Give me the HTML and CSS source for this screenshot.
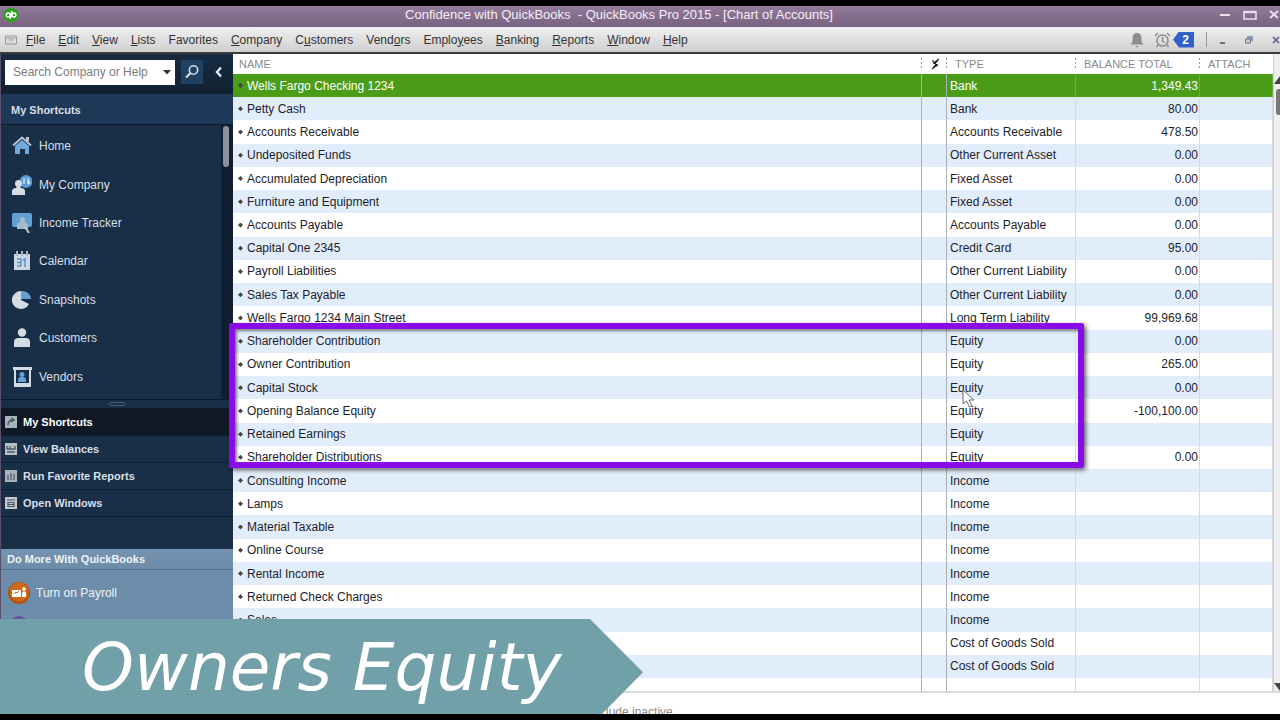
FILE: index.html
```html
<!DOCTYPE html>
<html lang="en">
<head>
<meta charset="utf-8">
<title>Confidence with QuickBooks - QuickBooks Pro 2015 - [Chart of Accounts]</title>
<link rel="stylesheet" href="styles.css">
</head>
<body>
<div class="app">
  <header class="titlebar">
    <svg class="logo" viewBox="0 0 16 14"><ellipse cx="8" cy="7" rx="8" ry="7" fill="#2ca01c"/><g fill="none" stroke="#fff" stroke-width="1.5"><circle cx="5.3" cy="7" r="2"/><path d="M7.3 5v6"/><circle cx="10.9" cy="7" r="2"/><path d="M8.9 3v6"/></g></svg>
    <h1 class="title">Confidence with QuickBooks&nbsp; - QuickBooks Pro 2015 - [Chart of Accounts]</h1>
    <div class="window-buttons">
      <button aria-label="Minimize"><svg width="12" height="12" viewBox="0 0 12 12"><path d="M1 6h10" stroke="#e8e0ec" stroke-width="2"/></svg></button>
      <button aria-label="Maximize"><svg width="14" height="12" viewBox="0 0 14 12"><path d="M1 3h12v7H1z" fill="none" stroke="#e8e0ec" stroke-width="1.6"/><path d="M1 3h12" stroke="#e8e0ec" stroke-width="2.400"/></svg></button>
      <button aria-label="Close"><svg width="10" height="12" viewBox="0 0 10 12"><path d="M1 2l8 7M9 2L1 9" stroke="#e8e0ec" stroke-width="2"/></svg></button>
    </div>
  </header>

  <nav class="menubar" aria-label="Main menu">
    <svg class="doc-icon" viewBox="0 0 12 10"><path d="M.5 1h11v8H.5zM1 3h10M4 5h4" fill="none" stroke="#999"/></svg>
    <div class="menus">
      <button><u>F</u>ile</button><button><u>E</u>dit</button><button><u>V</u>iew</button><button><u>L</u>ists</button><button>Favorites</button><button><u>C</u>ompany</button><button>C<u>u</u>stomers</button><button>Vend<u>o</u>rs</button><button>Emplo<u>y</u>ees</button><button><u>B</u>anking</button><button><u>R</u>eports</button><button><u>W</u>indow</button><button><u>H</u>elp</button>
    </div>
    <div class="menu-tools">
      <button aria-label="Alerts"><svg width="14" height="16" viewBox="0 0 14 16"><path d="M7 1c3 0 4.500 2 4.500 5v4l2 2.500H.5L2.500 10V6c0-3 1.500-5 4.500-5z" fill="#8d8d8d"/><path d="M5 14h4l-2 1.500z" fill="#8d8d8d"/></svg></button>
      <button class="reminders" aria-label="Reminders, 2"><svg width="17" height="16" viewBox="0 0 17 16"><g fill="none" stroke="#8a8a8a" stroke-width="1.400"><circle cx="8.500" cy="8.500" r="5.500"/><path d="M8.500 5v4l2 1.500M1 4l3-3M16 4l-3-3M4 13l-1.500 2M13 13l1.500 2"/></g></svg><span class="badge">2</span></button>
      <span class="divider"></span>
      <button aria-label="Minimize list"><svg width="7" height="12" viewBox="0 0 7 12"><path d="M1 9h5" stroke="#555" stroke-width="1.600"/></svg></button>
      <button aria-label="Restore list"><svg width="10" height="12" viewBox="0 0 10 12"><path d="M3 2h6v5H3z" fill="#8d98a8"/><path d="M1.500 5h5v4h-5z" fill="#c8ccd4" stroke="#66748a"/></svg></button>
      <button aria-label="Close list"><svg width="8" height="12" viewBox="0 0 8 12"><path d="M1 3l6 6M7 3L1 9" stroke="#53647e" stroke-width="1.600"/></svg></button>
    </div>
  </nav>

  <div class="workspace">
    <aside class="sidebar">
      <form class="search">
        <input type="text" placeholder="Search Company or Help" aria-label="Search Company or Help">
        <button type="button" class="scope" aria-label="Search scope"><svg width="8" height="5" viewBox="0 0 8 5"><path d="M0 0h8L4 4.500z" fill="#333"/></svg></button>
        <button type="button" class="find" aria-label="Search"><svg width="16" height="16" viewBox="0 0 16 16"><circle cx="9.500" cy="6" r="4.200" fill="none" stroke="#d4dde6" stroke-width="1.600"/><path d="M6.500 9L2 13.500" stroke="#d4dde6" stroke-width="2.200"/></svg></button>
        <button type="button" class="collapse" aria-label="Collapse"><svg width="8" height="12" viewBox="0 0 8 12"><path d="M6 1.500L2 6l4 4.500" fill="none" stroke="#e4eaf0" stroke-width="2.400"/></svg></button>
      </form>
      <h2 class="side-title">My Shortcuts</h2>
      <div class="shortcuts">
        <nav class="shortcut-list" aria-label="My Shortcuts">
          <a href="#"><svg viewBox="0 0 20 20"><path d="M3 10l7-6 7 6v8h-4v-5H8v5H3z" fill="#6fa8dc"/><path d="M1 9.500L10 1.500l9 8" fill="none" stroke="#b9c6d2" stroke-width="2"/><path d="M14 1h3v5l-3-2z" fill="#b9c6d2"/></svg>Home</a>
          <a href="#"><svg viewBox="0 0 20 20"><circle cx="14" cy="6.500" r="6.500" fill="#5b9bd5"/><path d="M12 3v6M16 3v6M16 6a1.500 1.500 0 1 1 0 3" stroke="#dbe9f6" fill="none" stroke-width="1.300"/><circle cx="6.500" cy="8.500" r="3.500" fill="#d5dbe2"/><path d="M0 20v-4c0-2 2-3 4-3l1-2h3l1 2c2 0 4 1 4 3v4z" fill="#d5dbe2"/></svg>My Company</a>
          <a href="#"><svg viewBox="0 0 20 20"><rect x="0" y="0" width="20" height="14" rx="2" fill="#62a0d8"/><path d="M10 4c2 0 3 1 3 3v2l3 2v5H5v-5l3-2V7c0-2 1-3 2-3z" fill="#a7b8ca"/><path d="M13 14l4 6" stroke="#b9c7d5" stroke-width="2"/></svg>Income Tracker</a>
          <a href="#"><svg viewBox="0 0 20 20"><path d="M2 3h16v16H2z" fill="#cbd8e4"/><path d="M5 0v5M10 0v5M15 0v5" stroke="#a8b8c8" stroke-width="2"/><path d="M5 8h4v7M5 11.500h4M5 15h4M11 9l2-1v8" fill="none" stroke="#5a93c8" stroke-width="1.500"/></svg>Calendar</a>
          <a href="#"><svg viewBox="0 0 20 20"><path d="M9 10V1a9 9 0 1 0 8 13z" fill="#d5dbe2"/><path d="M9 9V1a9 8 0 0 1 10 8z" fill="#62a0d8"/></svg>Snapshots</a>
          <a href="#"><svg viewBox="0 0 20 20"><circle cx="10" cy="4.500" r="4.200" fill="#d5dbe2"/><path d="M2 19v-5c0-3 2-4 4-4h8c2 0 4 1 4 4v5z" fill="#d5dbe2"/></svg>Customers</a>
          <a href="#"><svg viewBox="0 0 20 20"><path d="M1 0h19v3H1zM2 3h2v13H2zM17 3h2v13h-2zM2 16h17v4H2z" fill="#d5dbe2"/><circle cx="10" cy="7.500" r="2.500" fill="#62a0d8"/><path d="M6 15v-2c0-2 1-3 3-3h2c2 0 3 1 3 3v2z" fill="#62a0d8"/></svg>Vendors</a>
        </nav>
        <div class="side-scroll"><span></span></div>
      </div>
      <div class="splitter"><span></span></div>
      <div class="panels">
        <button class="active"><svg viewBox="0 0 12 12"><rect width="12" height="12" fill="#a9b1b9"/><path d="M3 9c0-4 2-5 5-5M6 2l3 2-3 2" fill="none" stroke="#4b5866" stroke-width="1.500"/></svg>My Shortcuts</button>
        <button><svg viewBox="0 0 12 12"><rect width="12" height="12" fill="#b9c0c7"/><path d="M2 3v3h8V3M5 3v3M2 9h8" fill="none" stroke="#4b5866" stroke-width="1.300"/></svg>View Balances</button>
        <button><svg viewBox="0 0 12 12"><rect width="12" height="12" fill="#a9b1b9"/><path d="M3 10V5M6 10V3M9 10V4" stroke="#5b6874" stroke-width="1.500"/></svg>Run Favorite Reports</button>
        <button><svg viewBox="0 0 12 12"><rect width="12" height="12" fill="#c3c9cf"/><path d="M2 3h8M3 5.500h6v4H3zM3 7.500h6" fill="none" stroke="#4b5866" stroke-width="1.200"/></svg>Open Windows</button>
      </div>
      <section class="more">
        <h2>Do More With QuickBooks</h2>
        <a href="#"><svg viewBox="0 0 22 22"><circle cx="11" cy="11" r="11" fill="#b5500f"/><circle cx="11" cy="10" r="9.500" fill="#cf6a1c"/><path d="M4 8h9v7H4z" fill="#fff"/><path d="M6 12l2-2 1 1 2-2" stroke="#cf6a1c" fill="none"/><circle cx="16" cy="7" r="1.800" fill="#fff"/><path d="M14 15v-4l1-1.500h2l1 1.500v4z" fill="#fff"/></svg>Turn on Payroll</a>
        <span class="next-offer"></span>
      </section>
    </aside>

    <main class="content">
      <div class="list-area">
        <table class="accounts">
          <thead><tr><th>NAME</th><th class="flag"><svg width="10" height="12" viewBox="0 0 10 12"><path d="M9 1L3 5l3 1-4 5 6-4-3-1z" fill="#222" stroke="#222"/><circle cx="3" cy="3" r="1" fill="#555"/></svg></th><th>TYPE</th><th>BALANCE TOTAL</th><th>ATTACH</th></tr></thead>
          <tbody>
            <tr class="selected"><td>Wells Fargo Checking 1234</td><td></td><td>Bank</td><td>1,349.43</td><td></td></tr>
            <tr><td>Petty Cash</td><td></td><td>Bank</td><td>80.00</td><td></td></tr>
            <tr><td>Accounts Receivable</td><td></td><td>Accounts Receivable</td><td>478.50</td><td></td></tr>
            <tr><td>Undeposited Funds</td><td></td><td>Other Current Asset</td><td>0.00</td><td></td></tr>
            <tr><td>Accumulated Depreciation</td><td></td><td>Fixed Asset</td><td>0.00</td><td></td></tr>
            <tr><td>Furniture and Equipment</td><td></td><td>Fixed Asset</td><td>0.00</td><td></td></tr>
            <tr><td>Accounts Payable</td><td></td><td>Accounts Payable</td><td>0.00</td><td></td></tr>
            <tr><td>Capital One 2345</td><td></td><td>Credit Card</td><td>95.00</td><td></td></tr>
            <tr><td>Payroll Liabilities</td><td></td><td>Other Current Liability</td><td>0.00</td><td></td></tr>
            <tr><td>Sales Tax Payable</td><td></td><td>Other Current Liability</td><td>0.00</td><td></td></tr>
            <tr><td>Wells Fargo 1234 Main Street</td><td></td><td>Long Term Liability</td><td>99,969.68</td><td></td></tr>
            <tr><td>Shareholder Contribution</td><td></td><td>Equity</td><td>0.00</td><td></td></tr>
            <tr><td>Owner Contribution</td><td></td><td>Equity</td><td>265.00</td><td></td></tr>
            <tr><td>Capital Stock</td><td></td><td>Equity</td><td>0.00</td><td></td></tr>
            <tr><td>Opening Balance Equity</td><td></td><td>Equity</td><td>-100,100.00</td><td></td></tr>
            <tr><td>Retained Earnings</td><td></td><td>Equity</td><td></td><td></td></tr>
            <tr><td>Shareholder Distributions</td><td></td><td>Equity</td><td>0.00</td><td></td></tr>
            <tr><td>Consulting Income</td><td></td><td>Income</td><td></td><td></td></tr>
            <tr><td>Lamps</td><td></td><td>Income</td><td></td><td></td></tr>
            <tr><td>Material Taxable</td><td></td><td>Income</td><td></td><td></td></tr>
            <tr><td>Online Course</td><td></td><td>Income</td><td></td><td></td></tr>
            <tr><td>Rental Income</td><td></td><td>Income</td><td></td><td></td></tr>
            <tr><td>Returned Check Charges</td><td></td><td>Income</td><td></td><td></td></tr>
            <tr><td>Sales</td><td></td><td>Income</td><td></td><td></td></tr>
            <tr><td></td><td></td><td>Cost of Goods Sold</td><td></td><td></td></tr>
            <tr><td></td><td></td><td>Cost of Goods Sold</td><td></td><td></td></tr>
            <tr class="filler"><td></td><td></td><td></td><td></td><td></td></tr>
          </tbody>
        </table>
        <div class="list-scroll">
          <svg viewBox="0 0 6 8"><path d="M6 0v8H0z" fill="#444"/></svg>
          <span></span>
          <svg class="down" viewBox="0 0 6 8"><path d="M0 0h6v8z" fill="#444"/></svg>
        </div>
        <div class="highlight"></div>
        <svg class="cursor" viewBox="0 0 14 20"><path d="M1 1v14l3.500-3 3 6 2.500-1-3-6h5z" fill="#fff" stroke="#667" stroke-width="1"/></svg>
      </div>
      <footer class="list-footer"><input type="checkbox" id="inactive"><label for="inactive">Include inactive</label></footer>
    </main>
  </div>
  <div class="banner"><span>Owners Equity</span></div>
</div>
</body>
</html>
```
FILE: styles.css
```css
* { box-sizing: border-box; }
body {
  margin: 0;
  background: #000;
  font-family: "Liberation Sans", Arial, sans-serif;
  font-size: 12px;
  line-height: 16px;
}
button { border: 0; padding: 0; background: none; font: inherit; color: inherit; text-align: left; }
a { color: inherit; text-decoration: none; }
h1, h2 { margin: 0; font-size: 11px; }
svg { display: block; flex: none; }

.app {
  position: relative;
  display: flex;
  flex-direction: column;
  height: 100vh;
  min-height: 720px;
  padding: 6px 0;
  overflow: hidden;
}

/* Title bar */
.titlebar {
  display: grid;
  grid-template-columns: 80px 1fr 80px;
  align-items: center;
  height: 21px;
  flex: none;
  padding-bottom: 4px;
  background: linear-gradient(#927a9b, #77627f);
  color: #f4eef6;
}
.logo { width: 16px; height: 14px; margin-left: 3px; }
.title { padding-right: 42px; font-size: 13px; font-weight: 400; text-align: center; }
.window-buttons { display: flex; justify-content: flex-end; gap: 12px; padding-right: 1px; }

/* Menu bar */
.menubar {
  display: flex;
  align-items: center;
  height: 27px;
  flex: none;
  padding-left: 5px;
  border-bottom: 2px solid #3b3b3b;
  background: linear-gradient(#f0f0f0, #cfcfcf);
  color: #333;
}
.doc-icon { width: 12px; height: 10px; }
.menus { display: flex; gap: 13px; margin-left: 9px; flex: 1; }
.menu-tools { display: flex; align-items: center; gap: 12px; }
.reminders { display: flex; align-items: center; gap: 2px; }
.badge {
  width: 21px;
  padding-left: 4px;
  background: #3060c8;
  clip-path: polygon(0 50%, 6px 0, 100% 0, 100% 100%, 6px 100%);
  color: #fff;
  font-weight: 700;
  text-align: center;
}
.menu-tools button:first-child { margin-right: -2px; }
.divider { width: 1px; height: 15px; background: #999; }
.menu-tools .divider ~ button { margin-right: 6px; }
.menu-tools button:last-child { margin-right: 0; }

.workspace {
  display: grid;
  grid-template-columns: 233px minmax(0, 1fr);
  flex: 1;
  min-height: 0;
}

/* Sidebar */
.sidebar {
  display: flex;
  flex-direction: column;
  border-left: 1px solid #5b4f6c;
  background: #192f48;
  color: #d8dfe7;
}
.search {
  display: flex;
  align-items: center;
  height: 40px;
  padding: 2px 4px 6px;
  background: linear-gradient(#172c44, #10202f);
}
.search input {
  flex: 1;
  min-width: 0;
  height: 25px;
  border: 0;
  padding: 0 0 0 8px;
  background: #fff;
  font: inherit;
}
.search input::placeholder { color: #7c7c7c; opacity: 1; }
.scope { height: 25px; padding: 0 4px; background: #fff; }
.find { height: 24px; margin-left: 6px; padding: 0 3px; background: #20405f; }
.collapse { margin: 0 6px 0 12px; }
.side-title { height: 31px; padding: 8px 10px; border-bottom: 1px solid #0b1826; background: #1e3957; }
.shortcuts { display: flex; min-height: 274px; }
.shortcut-list { display: flex; flex-direction: column; flex: 1; padding: 2px 0 3px 11px; }
.shortcut-list a { display: flex; align-items: center; gap: 7px; flex: 1 0 38px; }
.shortcut-list svg { width: 20px; height: 20px; }
.side-scroll { width: 12px; padding: 1px 2px; background: #101f31; }
.side-scroll span { display: block; width: 6px; height: 41px; border-radius: 3px; background: #8b929b; }
.splitter { display: flex; justify-content: center; align-items: center; height: 9px; border-top: 1px solid #0b1826; }
.splitter span { width: 16px; height: 4px; border: 1px solid #47617c; border-radius: 2px; }
.panels { display: flex; flex-direction: column; margin-bottom: 32px; font-size: 11px; font-weight: 700; }
.panels button { display: flex; align-items: center; gap: 6px; height: 27px; padding-left: 4px; border-bottom: 1px solid #0e1f31; }
.panels .active { height: 28px; background: #0e1925; color: #fff; }
.panels svg { width: 12px; height: 12px; }
.more { flex: 1; background: #6d8caa; color: #eef3f7; }
.more h2 { height: 21px; padding: 2px 6px; border-bottom: 1px solid #54708e; background: linear-gradient(#7593b1, #6d8caa); }
.more a { display: flex; align-items: center; gap: 6px; height: 46px; padding-left: 7px; }
.more a svg { width: 22px; height: 22px; }
.next-offer { display: block; width: 20px; height: 20px; margin-left: 8px; border-radius: 10px; background: #6a55a0; }

/* Account list */
.content { display: flex; flex-direction: column; min-width: 0; background: #fff; }
.list-area { position: relative; display: flex; flex: 1; min-height: 0; border-bottom: 2px solid #dcdcdc; }
.accounts { display: flex; flex-direction: column; flex: 1; color: #1d1d2b; }
.accounts tbody { display: flex; flex-direction: column; flex: 1; }
.accounts tr { display: grid; grid-template-columns: minmax(0, 1fr) 25px 129px 124px 73px; flex: 1; }
.accounts thead tr { height: 20px; }
.accounts th {
  padding: 2px 0 2px 8px;
  background: repeating-linear-gradient(#999 0 2px, transparent 2px 4px) right 4px / 1px 10px no-repeat;
  color: #8a8a8a;
  font-size: 11px;
  font-weight: 400;
  text-align: left;
}
.accounts th:first-child { padding-left: 6px; }
.accounts th:last-child { background: none; }
.accounts .flag { padding: 4px 0 0 8px; }
.accounts td {
  display: flex;
  align-items: center;
  padding: 0 1px 0 3px;
  border-right: 1px solid #d5dbe4;
  white-space: nowrap;
}
.accounts td:nth-child(-n+2) { border-right-color: #aab0b8; }
.accounts td:first-child { gap: 4px; padding-left: 5px; }
.accounts td:first-child:not(:empty)::before { content: ""; width: 5px; height: 5px; background: #444; clip-path: polygon(50% 0, 100% 50%, 50% 100%, 0 50%); }
.accounts td:nth-child(4) { justify-content: flex-end; }
.accounts tbody tr:nth-child(even) { background: #e2edfb; }
.accounts tbody .selected { background: #4b9d18; color: #fff; }
.accounts tbody .selected td:nth-child(n+3) { border-right-color: #6bae40; }
.accounts tbody .filler { flex: 0 0 13px; }
.list-scroll { display: flex; flex-direction: column; width: 7px; padding-top: 22px; border-left: 1px solid #ccc; background: #efefef; }
.list-scroll svg { width: 6px; height: 8px; }
.list-scroll span { height: 26px; margin: 5px 0 0 2px; border-radius: 3px 0 0 3px; background: #777; }
.list-scroll .down { margin-top: auto; }
.list-footer { display: flex; align-items: flex-start; gap: 6px; height: 21px; padding: 11px 0 0 338px; overflow: hidden; color: #8b8b8b; flex: none; }
.list-footer input { width: 13px; height: 13px; margin: 0; }

/* Annotations lying over the list */
.highlight {
  position: absolute;
  top: 269px;
  right: 196px;
  left: -4px;
  height: 145px;
  border: 6px solid #8b0be8;
  border-radius: 2px;
  box-shadow: 2px 2px 4px rgba(0, 0, 0, .6), inset 2px 2px 3px rgba(0, 0, 0, .5);
}
.cursor { position: absolute; top: 335px; right: 304px; width: 14px; height: 20px; }
.banner {
  position: absolute;
  bottom: 6px;
  left: 0;
  width: 643px;
  height: 95px;
  padding: 9px 0 0 82px;
  background: #71a0a8;
  clip-path: polygon(0 0, 590px 0, 100% 56%, 602px 100%, 0 100%);
  color: #fff;
  font-family: "Segoe Print", "Bradley Hand", "DejaVu Sans", sans-serif;
  font-size: 66px;
  font-style: italic;
  line-height: 80px;
  white-space: nowrap;
}
```
